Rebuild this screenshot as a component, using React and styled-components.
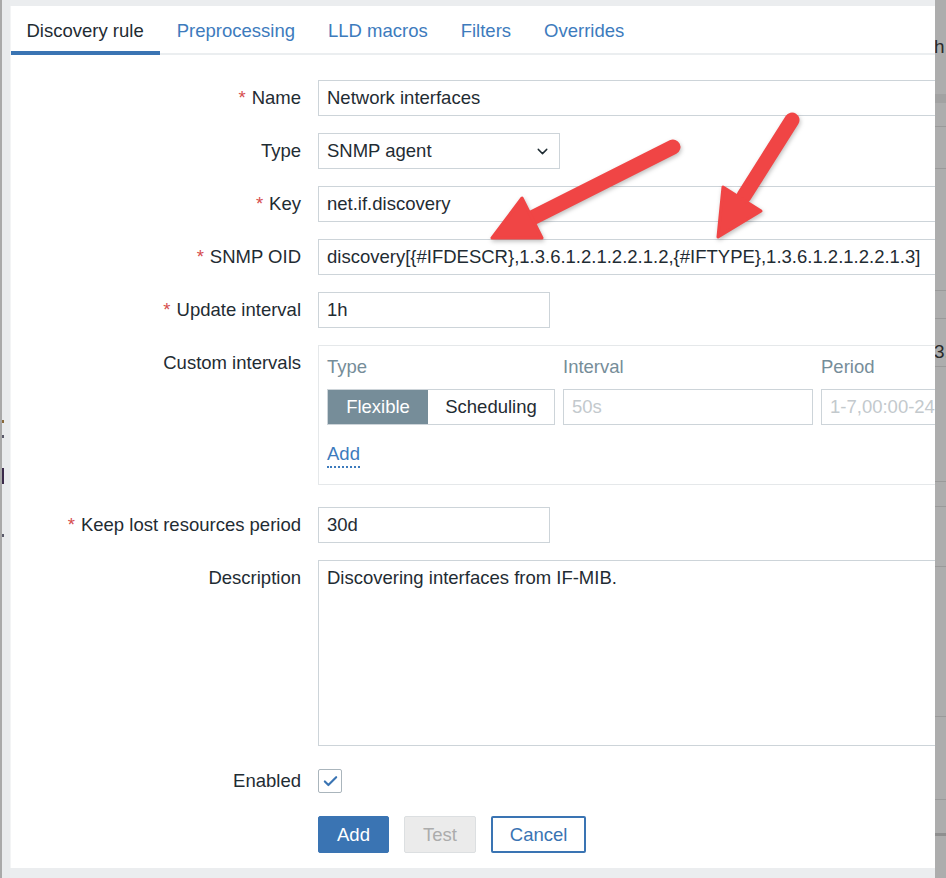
import React from "react";
import styled, { createGlobalStyle } from "styled-components";
import { ChevronDown, Check } from "lucide-react";

const GlobalStyle = createGlobalStyle`
  body {
    margin: 0;
    font-family: "Liberation Sans", Arial, sans-serif;
    background: #ebedef;
    color: #1f2c33;
  }
`;

const Page = styled.div`
  position: relative;
  height: 878px;
  display: flex;
  overflow: hidden;
`;

const LeftStrip = styled.div`
  width: 8px;
  flex: none;
  border-left: 2px solid #a9a9a9;
  background: #e9ebed;
  display: flex;
  flex-direction: column;
`;

const Mark = styled.div`
  width: 2px;
  height: ${(p) => p.h}px;
  margin-top: ${(p) => p.top}px;
  background: ${(p) => p.color};
`;

const Main = styled.div`
  flex: 1;
  display: flex;
  flex-direction: column;
  padding: 6px 0 10px;
  min-width: 0;
`;

const Dialog = styled.div`
  flex: 1;
  background: #fff;
  overflow: hidden;
  border-left: 1px solid #f3f4f5;
`;

const TabBar = styled.div`
  display: flex;
  height: 49px;
  border-bottom: 2px solid #ebeef0;
  box-sizing: border-box;
`;

const Tab = styled.div`
  padding: 0 16.5px 0 ${(p) => (p.active ? 15.5 : 16.5)}px;
  display: flex;
  align-items: center;
  font-size: 18.5px;
  color: ${(p) => (p.active ? "#1f2c33" : "#3d7bbd")};
  border-bottom: 4px solid ${(p) => (p.active ? "#3a74b3" : "transparent")};
  margin-bottom: -2px;
  padding-top: 4px;
`;

const Form = styled.div`
  display: grid;
  grid-template-columns: 290px 1fr;
  column-gap: 17px;
  row-gap: 17px;
  padding-top: 25px;
`;

const Label = styled.div`
  text-align: right;
  font-size: 18.5px;
  line-height: 36px;
  white-space: nowrap;
  align-self: start;
`;

const Star = styled.span`
  color: #d64e4e;
  margin-right: 6px;
`;

const Input = styled.div`
  box-sizing: border-box;
  height: 36px;
  width: ${(p) => p.w}px;
  border: 1px solid #cdd4d9;
  padding: 0 8px;
  display: flex;
  align-items: center;
  justify-content: space-between;
  font-size: 18.5px;
  color: ${(p) => (p.placeholder ? "#c3c9cd" : "#1f2c33")};
  white-space: nowrap;
  overflow: hidden;
`;

const TextArea = styled(Input)`
  height: 186px;
  align-items: flex-start;
  padding-top: 6px;
`;

const IntervalsBox = styled.div`
  box-sizing: border-box;
  width: 660px;
  border: 1px solid #e5e8ea;
  padding: 8px 8px 16px;
  margin-bottom: 5px;
`;

const IntervalGrid = styled.div`
  display: grid;
  grid-template-columns: 228px 250px 250px;
  column-gap: 8px;
  row-gap: 9px;
`;

const ColHead = styled.div`
  font-size: 18.5px;
  line-height: 26px;
  color: #768d99;
`;

const Segmented = styled.div`
  display: flex;
  height: 36px;
  border: 1px solid #cdd4d9;
  box-sizing: border-box;
`;

const Segment = styled.div`
  width: ${(p) => p.w}px;
  display: flex;
  align-items: center;
  justify-content: center;
  font-size: 18.5px;
  background: ${(p) => (p.active ? "#768d99" : "#fff")};
  color: ${(p) => (p.active ? "#fff" : "#1f2c33")};
`;

const AddLink = styled.span`
  display: inline-block;
  margin-top: 17px;
  font-size: 18.5px;
  line-height: 24px;
  color: #3d7bbd;
  border-bottom: 2px dotted #3d7bbd;
`;

const CheckBox = styled.div`
  width: 24px;
  height: 24px;
  margin-top: 6px;
  box-sizing: border-box;
  border: 1px solid #aab5bc;
  border-radius: 2px;
  display: flex;
  align-items: center;
  justify-content: center;
  color: #3a74b3;
`;

const Buttons = styled.div`
  grid-column: 2;
  display: flex;
  gap: 15px;
`;

const Button = styled.div`
  box-sizing: border-box;
  height: 37px;
  padding: 0 ${(p) => p.pad}px;
  display: flex;
  align-items: center;
  font-size: 18.5px;
  border-radius: 2px;
  border: ${(p) =>
    p.variant === "primary"
      ? "1px solid #3a74b3"
      : p.variant === "disabled"
      ? "1px solid #dcdfe1"
      : "2px solid #3a74b3"};
  background: ${(p) =>
    p.variant === "primary" ? "#3a74b3" : p.variant === "disabled" ? "#ebebeb" : "#fff"};
  color: ${(p) =>
    p.variant === "primary" ? "#fff" : p.variant === "disabled" ? "#acacac" : "#3a74b3"};
`;

const RightStrip = styled.div`
  width: 11px;
  flex: none;
  background: #adadad;
  overflow: hidden;
  display: flex;
  flex-direction: column;
`;

const StripText = styled.div`
  margin-top: ${(p) => p.top}px;
  font-size: 19px;
  line-height: 18px;
  color: #2a2a2a;
  white-space: nowrap;
  margin-left: -1px;
`;

const StripLine = styled.div`
  margin-top: ${(p) => p.top}px;
  height: ${(p) => p.h || 1}px;
  background: ${(p) => p.color || "#9a9a9a"};
  flex: none;
`;

const Overlay = styled.svg`
  position: absolute;
  left: 0;
  top: 0;
  pointer-events: none;
  filter: drop-shadow(1px 2px 2px rgba(0, 0, 0, 0.25));
`;

const arrows = [
  { tail: [673, 147], base: [530, 219], tip: [492, 238], w1: [542, 238], w2: [522, 198] },
  { tail: [792, 120], base: [744, 196], tip: [718, 237], w1: [761, 211], w2: [723, 187] },
];

function Arrows() {
  return (
    <Overlay width="946" height="878" viewBox="0 0 946 878">
      {arrows.map((a, i) => (
        <g key={i} fill="#f04545" stroke="#f04545">
          <line
            x1={a.tail[0]}
            y1={a.tail[1]}
            x2={a.base[0]}
            y2={a.base[1]}
            strokeWidth="15"
            strokeLinecap="round"
          />
          <polygon
            points={`${a.tip.join(",")} ${a.w1.join(",")} ${a.w2.join(",")}`}
            strokeWidth="3"
            strokeLinejoin="round"
          />
        </g>
      ))}
    </Overlay>
  );
}

const Req = ({ children }) => (
  <Label>
    <Star>*</Star>
    {children}
  </Label>
);

export default function App() {
  return (
    <>
      <GlobalStyle />
      <Page>
        <LeftStrip>
          <Mark top={420} h={3} color="#8a6a3a" />
          <Mark top={12} h={3} color="#5a5a6a" />
          <Mark top={30} h={16} color="#3a2a4a" />
          <Mark top={50} h={3} color="#5a5a6a" />
        </LeftStrip>
        <Main>
          <Dialog>
            <TabBar>
              <Tab active>Discovery rule</Tab>
              <Tab>Preprocessing</Tab>
              <Tab>LLD macros</Tab>
              <Tab>Filters</Tab>
              <Tab>Overrides</Tab>
            </TabBar>
            <Form>
              <Req>Name</Req>
              <Input w={660}>Network interfaces</Input>

              <Label>Type</Label>
              <Input w={242}>
                SNMP agent
                <ChevronDown size={17} strokeWidth={2} />
              </Input>

              <Req>Key</Req>
              <Input w={660}>net.if.discovery</Input>

              <Req>SNMP OID</Req>
              <Input w={660}>
                discovery[{"{#IFDESCR}"},1.3.6.1.2.1.2.2.1.2,{"{#IFTYPE}"},1.3.6.1.2.1.2.2.1.3]
              </Input>

              <Req>Update interval</Req>
              <Input w={232}>1h</Input>

              <Label>Custom intervals</Label>
              <IntervalsBox>
                <IntervalGrid>
                  <ColHead>Type</ColHead>
                  <ColHead>Interval</ColHead>
                  <ColHead>Period</ColHead>
                  <Segmented>
                    <Segment w={100} active>
                      Flexible
                    </Segment>
                    <Segment w={126}>Scheduling</Segment>
                  </Segmented>
                  <Input w={250} placeholder="true">
                    50s
                  </Input>
                  <Input w={250} placeholder="true">
                    1-7,00:00-24:00
                  </Input>
                </IntervalGrid>
                <AddLink>Add</AddLink>
              </IntervalsBox>

              <Req>Keep lost resources period</Req>
              <Input w={232}>30d</Input>

              <Label>Description</Label>
              <TextArea w={660}>Discovering interfaces from IF-MIB.</TextArea>

              <Label>Enabled</Label>
              <CheckBox>
                <Check size={17} strokeWidth={3} />
              </CheckBox>

              <Buttons>
                <Button variant="primary" pad={18}>
                  Add
                </Button>
                <Button variant="disabled" pad={18}>
                  Test
                </Button>
                <Button variant="secondary" pad={17}>
                  Cancel
                </Button>
              </Buttons>
            </Form>
          </Dialog>
        </Main>
        <RightStrip>
          <StripText top={38}>h</StripText>
          <StripLine top={38} h={9} color="#a2a2a2" />
          <StripLine top={23} />
          <StripLine top={41} />
          <StripLine top={121} />
          <StripLine top={27} />
          <StripText top={24}>3.(</StripText>
          <StripLine top={5} />
          <StripLine top={114} />
          <StripLine top={24} />
          <StripLine top={59} />
          <StripLine top={149} />
          <StripLine top={82} />
          <StripLine top={33} h={3} color="#8f8f8f" />
        </RightStrip>
        <Arrows />
      </Page>
    </>
  );
}
